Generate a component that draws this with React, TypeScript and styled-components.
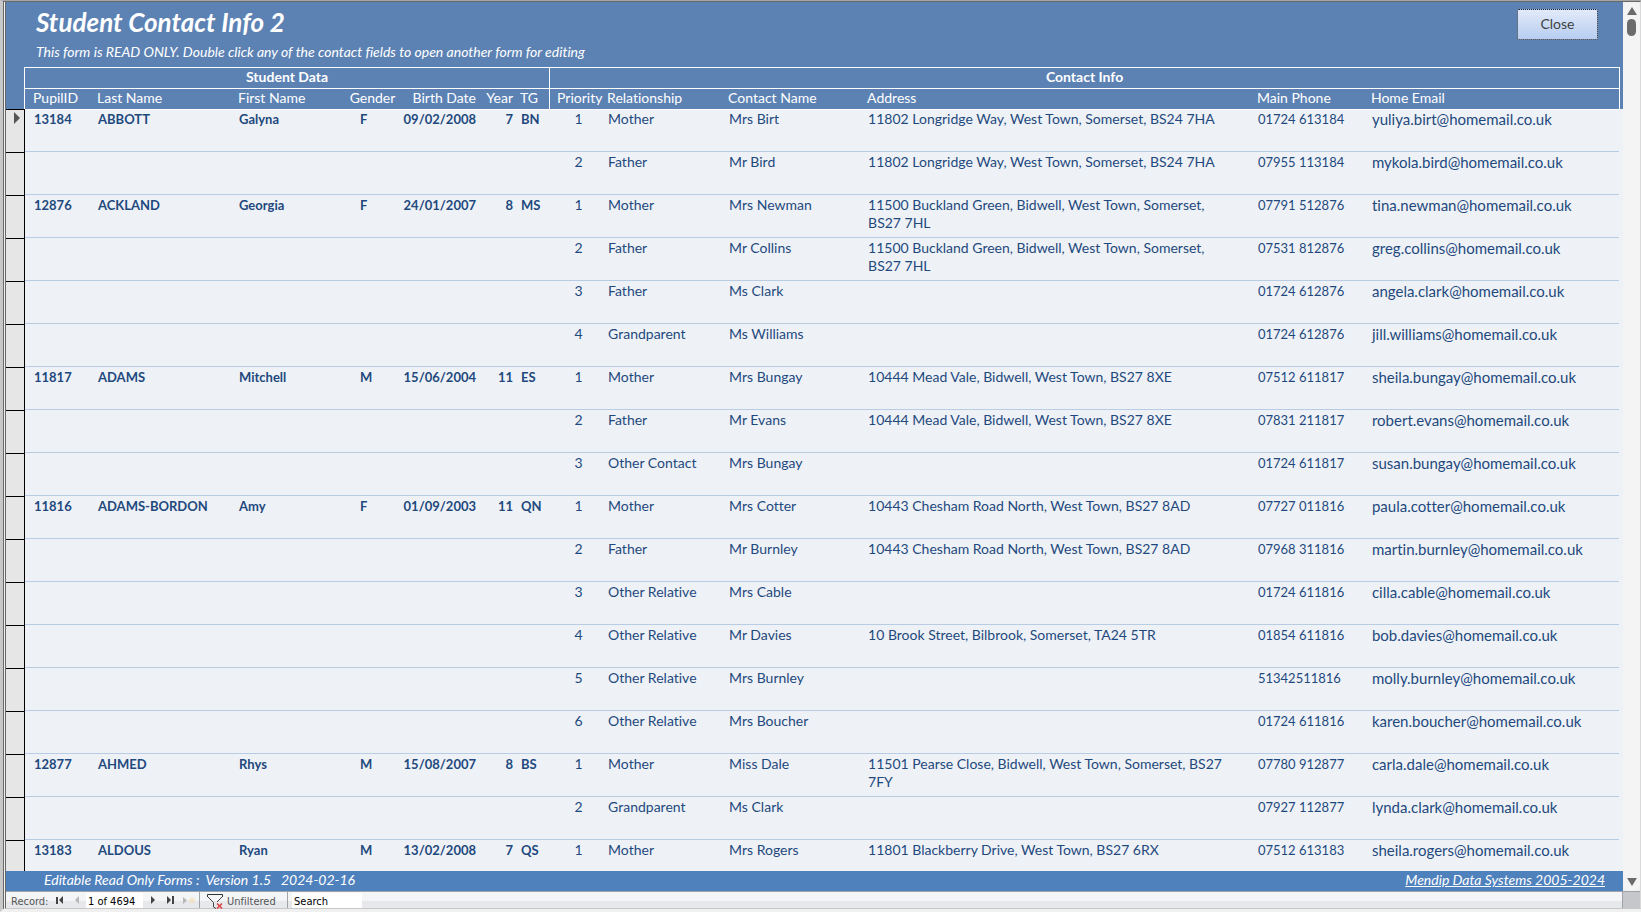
import React from "react";
import styled, { createGlobalStyle } from "styled-components";

const GlobalStyle = createGlobalStyle`
  *, *::before, *::after { box-sizing: border-box; }
  body {
    margin: 0;
    background: #c8c8c8;
    font-family: Lato, "Open Sans", sans-serif;
    font-size: 14px;
    line-height: 18px;
    font-variant-ligatures: none;
  }
  button, input { font: inherit; }
`;

const ink = "#1f497d";
const blue = "#5c82b4";
const paper = "#eef2f7";

const Window = styled.div`
  height: 100vh;
  display: flex;
  flex-direction: column;
  background: #f0f0f0;
  border-top: 1px solid #a6a6a6;
  border-left: 3px solid #c8c8c8;
  border-bottom: 3px solid #f0f0f0;
`;
const Frame = styled.div`
  flex: 1;
  min-height: 0;
  display: flex;
  flex-direction: column;
  border-top: 1px solid #696969;
  border-left: 3px double #696969;
  border-right: 1px solid #d9d9d9;
  border-bottom: 1px solid #c8c8c8;
`;
const Body = styled.div`
  flex: 1;
  min-height: 0;
  display: flex;
`;
const Form = styled.main`
  flex: 1;
  min-width: 0;
  display: flex;
  flex-direction: column;
  background: ${paper};
`;
const Header = styled.header`
  flex: none;
  height: 65px;
  padding: 7px 25px 0 30px;
  display: flex;
  justify-content: space-between;
  align-items: flex-start;
  background: ${blue};
  color: #fff;
`;
const Title = styled.h1`
  margin: 0;
  font-size: 26px;
  line-height: 26px;
  font-style: italic;
  font-weight: 700;
`;
const Hint = styled.p`
  margin: 8px 0 0;
  font-style: italic;
  line-height: 18px;
`;
const CloseButton = styled.button`
  width: 81px;
  height: 31px;
  padding: 0 0 2px;
  border: 1px solid #a9c1e6;
  border-radius: 2px;
  background: linear-gradient(#e2eafa, #b7cdf0);
  outline: 1px dotted #222;
  outline-offset: -1px;
  color: #3f3f3f;
`;
const Records = styled.div`
  flex: 1;
  min-height: 0;
  overflow: hidden;
`;
const Table = styled.table`
  width: 100%;
  table-layout: fixed;
  border-collapse: separate;
  border-spacing: 0;
  color: ${ink};
`;
const Col = styled.col<{ $w?: number }>`
  width: ${(p) => (p.$w ? `${p.$w}px` : "auto")};
`;
type Align = "left" | "right" | "center";
const HeadCell = styled.th<{ $group?: boolean; $rule?: boolean; $align?: Align; $inset?: number }>`
  height: 21px;
  padding: 0 0 2px ${(p) => p.$inset ?? 0}px;
  white-space: nowrap;
  line-height: 18px;
  background: ${blue};
  color: #fff;
  text-align: ${(p) => p.$align ?? "left"};
  font-weight: ${(p) => (p.$group ? 700 : 400)};
  border-top: 1px solid #fff;
  border-left: ${(p) => (p.$rule ? "1px solid #fff" : "0")};
`;
const MarginCell = styled.td<{ $side: "left" | "right" }>`
  padding: 0;
  background: ${blue};
  ${(p) => (p.$side === "left" ? "border-right" : "border-left")}: 1px solid #fff;
`;
const Cell = styled.td<{ $kind?: "student" | "phone" | "email" | "address"; $align?: Align; $inset?: number }>`
  height: 43px;
  padding: 1px ${(p) => (p.$kind === "address" ? 26 : 0)}px 0 ${(p) => p.$inset ?? 1}px;
  vertical-align: top;
  border-bottom: 1px solid #b8cce4;
  text-align: ${(p) => p.$align ?? "left"};
  font-weight: ${(p) => (p.$kind === "student" ? 700 : 400)};
  font-size: ${(p) => (p.$kind === "email" ? 15 : p.$kind === "student" || p.$kind === "phone" ? 13 : 14)}px;
  tr:first-child > & { box-shadow: inset 0 1px #fff; }
`;
const Selector = styled.td`
  padding: 2px 0 0 8px;
  vertical-align: top;
  background: #e6e6e6;
  border-top: 1px solid #000;
  border-right: 1px solid #000;
  svg { display: block; }
`;
const EdgeCell = styled.td`
  padding: 0;
`;
const Footer = styled.footer`
  flex: none;
  height: 20px;
  padding: 0 18px 0 38px;
  display: flex;
  justify-content: space-between;
  background: #4f81bd;
  color: #fff;
  font-style: italic;
  white-space: pre;
  a { color: inherit; }
`;
const ScrollTrack = styled.div`
  flex: none;
  width: 17px;
  padding: 5px 0;
  display: flex;
  flex-direction: column;
  align-items: center;
  border-radius: 8px;
  background: #f4f4f4;
`;
const Thumb = styled.div`
  width: 9px;
  height: 17px;
  margin-top: 4px;
  border-radius: 5px;
  background: #6b6b6b;
`;
const ScrollButton = styled.button<{ $last?: boolean }>`
  width: 10px;
  height: 8px;
  padding: 0;
  border: 0;
  background: none;
  margin-top: ${(p) => (p.$last ? "auto" : "0")};
  svg { display: block; }
`;
const NavBar = styled.nav`
  flex: none;
  height: 17px;
  display: flex;
  justify-content: space-between;
  border-top: 1px solid #a0a4aa;
  background: linear-gradient(#f4f5f7 0 9px, #e6e8ec 9px);
  font-family: "DejaVu Sans Condensed", "DejaVu Sans", sans-serif;
  font-size: 11px;
  line-height: 15px;
  color: #555;
`;
const NavItems = styled.div`
  display: flex;
  align-items: stretch;
  padding: 0 0 0 5px;
`;
const NavLabel = styled.label`
  width: 41px;
  padding-top: 2px;
`;
const IconButton = styled.button<{ $w: number }>`
  width: ${(p) => p.$w}px;
  padding: 0;
  border: 0;
  background: none;
  display: grid;
  place-items: center;
`;
const NavInput = styled.input<{ $w: number }>`
  width: ${(p) => p.$w}px;
  height: 15px;
  margin-top: 1px;
  padding: 1px 2px 0;
  border: 0;
  background: #fff;
  color: #000;
`;
const FilterButton = styled.button`
  display: flex;
  align-items: center;
  gap: 3px;
  width: 89px;
  margin-right: 4px;
  padding: 2px 0 0 7px;
  border: solid #a0a4aa;
  border-width: 0 1px;
  background: none;
  color: inherit;
  svg { flex: none; }
`;
const Corner = styled.div`
  width: 18px;
  background: #c5c7cb;
  border-left: 1px solid #a0a4aa;
`;

type Contact = [string, string, string, string, string];
type Student = { data: string[]; contacts: Contact[] };

const students: Student[] = [
  { data: ["13184", "ABBOTT", "Galyna", "F", "09/02/2008", "7", "BN"], contacts: [
    ["Mother", "Mrs Birt", "11802 Longridge Way, West Town, Somerset, BS24 7HA", "01724 613184", "yuliya.birt@homemail.co.uk"],
    ["Father", "Mr Bird", "11802 Longridge Way, West Town, Somerset, BS24 7HA", "07955 113184", "mykola.bird@homemail.co.uk"],
  ] },
  { data: ["12876", "ACKLAND", "Georgia", "F", "24/01/2007", "8", "MS"], contacts: [
    ["Mother", "Mrs Newman", "11500 Buckland Green, Bidwell, West Town, Somerset, BS27 7HL", "07791 512876", "tina.newman@homemail.co.uk"],
    ["Father", "Mr Collins", "11500 Buckland Green, Bidwell, West Town, Somerset, BS27 7HL", "07531 812876", "greg.collins@homemail.co.uk"],
    ["Father", "Ms Clark", "", "01724 612876", "angela.clark@homemail.co.uk"],
    ["Grandparent", "Ms Williams", "", "01724 612876", "jill.williams@homemail.co.uk"],
  ] },
  { data: ["11817", "ADAMS", "Mitchell", "M", "15/06/2004", "11", "ES"], contacts: [
    ["Mother", "Mrs Bungay", "10444 Mead Vale, Bidwell, West Town, BS27 8XE", "07512 611817", "sheila.bungay@homemail.co.uk"],
    ["Father", "Mr Evans", "10444 Mead Vale, Bidwell, West Town, BS27 8XE", "07831 211817", "robert.evans@homemail.co.uk"],
    ["Other Contact", "Mrs Bungay", "", "01724 611817", "susan.bungay@homemail.co.uk"],
  ] },
  { data: ["11816", "ADAMS-BORDON", "Amy", "F", "01/09/2003", "11", "QN"], contacts: [
    ["Mother", "Mrs Cotter", "10443 Chesham Road North, West Town, BS27 8AD", "07727 011816", "paula.cotter@homemail.co.uk"],
    ["Father", "Mr Burnley", "10443 Chesham Road North, West Town, BS27 8AD", "07968 311816", "martin.burnley@homemail.co.uk"],
    ["Other Relative", "Mrs Cable", "", "01724 611816", "cilla.cable@homemail.co.uk"],
    ["Other Relative", "Mr Davies", "10 Brook Street, Bilbrook, Somerset, TA24 5TR", "01854 611816", "bob.davies@homemail.co.uk"],
    ["Other Relative", "Mrs Burnley", "", "51342511816", "molly.burnley@homemail.co.uk"],
    ["Other Relative", "Mrs Boucher", "", "01724 611816", "karen.boucher@homemail.co.uk"],
  ] },
  { data: ["12877", "AHMED", "Rhys", "M", "15/08/2007", "8", "BS"], contacts: [
    ["Mother", "Miss Dale", "11501 Pearse Close, Bidwell, West Town, Somerset, BS27 7FY", "07780 912877", "carla.dale@homemail.co.uk"],
    ["Grandparent", "Ms Clark", "", "07927 112877", "lynda.clark@homemail.co.uk"],
  ] },
  { data: ["13183", "ALDOUS", "Ryan", "M", "13/02/2008", "7", "QS"], contacts: [
    ["Mother", "Mrs Rogers", "11801 Blackberry Drive, West Town, BS27 6RX", "07512 613183", "sheila.rogers@homemail.co.uk"],
  ] },
];

const blank = ["", "", "", "", "", "", ""];
const rows = students.flatMap((s) =>
  s.contacts.map((c, i) => ({ data: i === 0 ? s.data : blank, priority: i + 1, contact: c })),
);
const studentInsets = [9, 1, 1, 11, 0, 0, 8];
const studentAligns: Align[] = ["left", "left", "left", "left", "right", "right", "left"];
const contactKinds = [undefined, undefined, "address", "phone", "email"] as const;
const columnWidths = [19, 72, 141, 111, 47, 80, 37, 36, 58, 121, 139];

const Glyph = ({ d, w = 8, h = 8, fill = "#444" }: { d: string; w?: number; h?: number; fill?: string }) => (
  <svg width={w} height={h} viewBox={`0 0 ${w} ${h}`} aria-hidden="true"><path d={d} fill={fill} /></svg>
);
const NewRecordIcon = () => (
  <svg width="13" height="9" viewBox="0 0 13 9" aria-hidden="true">
    <path d="M0 1V8L4 4.500Z" fill="#b8b8b8" />
    <path d="M9 1V8M5.500 4.500H12.500M6.500 2L11.500 7M11.500 2L6.500 7" stroke="#f3dfbd" strokeWidth="1" />
  </svg>
);
const FunnelIcon = () => (
  <svg width="17" height="15" viewBox="0 0 17 15" aria-hidden="true">
    <path d="M15.500 2.500L10 8M0.500 2.500L6.500 8.500V13L9 14.500" fill="none" stroke="#444" strokeWidth="1" />
    <path d="M0.500 3V0.500H15.500V3" fill="none" stroke="#333" strokeWidth="1" />
    <path d="M10 9.500L15 14.500M15 9.500L10 14.500" stroke="#e04343" strokeWidth="1.600" />
  </svg>
);

export default function App() {
  return (
    <>
      <GlobalStyle />
      <Window>
        <Frame>
          <Body>
            <Form>
              <Header>
                <div>
                  <Title>Student Contact Info 2</Title>
                  <Hint>This form is READ ONLY. Double click any of the contact fields to open another form for editing</Hint>
                </div>
                <CloseButton type="button">Close</CloseButton>
              </Header>
              <Records>
                <Table>
                  <colgroup>
                    {columnWidths.map((w, i) => <Col key={i} $w={w} />)}
                    <Col />
                    <Col $w={114} /><Col $w={248} /><Col $w={4} />
                  </colgroup>
                  <thead>
                    <tr>
                      <MarginCell $side="left" />
                      <HeadCell $group $align="center" colSpan={7} scope="colgroup">Student Data</HeadCell>
                      <HeadCell $group $rule $align="center" colSpan={6} scope="colgroup">Contact Info</HeadCell>
                      <MarginCell $side="right" />
                    </tr>
                    <tr>
                      <MarginCell $side="left" />
                      <HeadCell $inset={8}>PupilID</HeadCell>
                      <HeadCell>Last Name</HeadCell>
                      <HeadCell>First Name</HeadCell>
                      <HeadCell $align="center">Gender</HeadCell>
                      <HeadCell $align="right">Birth Date</HeadCell>
                      <HeadCell $align="right">Year</HeadCell>
                      <HeadCell $inset={7}>TG</HeadCell>
                      <HeadCell $rule $inset={7}>Priority</HeadCell>
                      <HeadCell>Relationship</HeadCell>
                      <HeadCell>Contact Name</HeadCell>
                      <HeadCell>Address</HeadCell>
                      <HeadCell>Main Phone</HeadCell>
                      <HeadCell>Home Email</HeadCell>
                      <MarginCell $side="right" />
                    </tr>
                  </thead>
                  <tbody>
                    {rows.map((r, i) => (
                      <tr key={i}>
                        <Selector>{i === 0 && <Glyph w={7} h={12} fill="#555" d="M0 0L6 6L0 12Z" />}</Selector>
                        {r.data.map((v, j) => (
                          <Cell key={j} $kind="student" $inset={studentInsets[j]} $align={studentAligns[j]}>{v}</Cell>
                        ))}
                        <Cell $align="center">{r.priority}</Cell>
                        {r.contact.map((v, j) => <Cell key={j} $kind={contactKinds[j]}>{v}</Cell>)}
                        <EdgeCell />
                      </tr>
                    ))}
                  </tbody>
                </Table>
              </Records>
              <Footer>
                <span>Editable Read Only Forms :  Version 1.5   2024-02-16</span>
                <a href="#mendip">Mendip Data Systems 2005-2024</a>
              </Footer>
            </Form>
            <ScrollTrack>
              <ScrollButton type="button" aria-label="Scroll up"><Glyph w={10} h={8} fill="#6b6b6b" d="M5 0L10 8H0Z" /></ScrollButton>
              <Thumb />
              <ScrollButton $last type="button" aria-label="Scroll down"><Glyph w={10} h={8} fill="#6b6b6b" d="M0 0H10L5 8Z" /></ScrollButton>
            </ScrollTrack>
          </Body>
          <NavBar>
            <NavItems>
              <NavLabel htmlFor="record">Record:</NavLabel>
              <IconButton $w={16} type="button" aria-label="First record"><Glyph d="M0 1H2V8H0ZM7 0V8L3 4Z" /></IconButton>
              <IconButton $w={18} type="button" aria-label="Previous record"><Glyph fill="#b8b8b8" d="M6 0V8L2 4Z" /></IconButton>
              <NavInput id="record" $w={57} defaultValue="1 of 4694" />
              <IconButton $w={20} type="button" aria-label="Next record"><Glyph d="M2 0V8L6 4Z" /></IconButton>
              <IconButton $w={16} type="button" aria-label="Last record"><Glyph d="M5 0H7V8H5ZM0 0V8L4 4Z" /></IconButton>
              <IconButton $w={20} type="button" aria-label="New record"><NewRecordIcon /></IconButton>
              <FilterButton type="button"><FunnelIcon />Unfiltered</FilterButton>
              <NavInput $w={70} aria-label="Search" defaultValue="Search" />
            </NavItems>
            <Corner />
          </NavBar>
        </Frame>
      </Window>
    </>
  );
}
